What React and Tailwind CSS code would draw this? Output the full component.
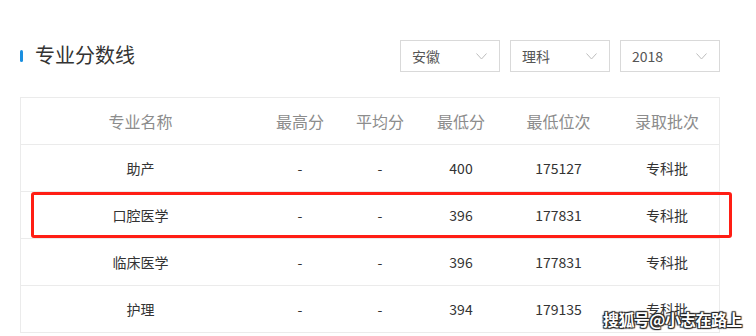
import React from 'react'

const FONT = { fontFamily: '"Noto Sans CJK SC", "Noto Sans", sans-serif' }

const COLS = 'grid grid-cols-[239px_80px_80px_82px_113px_104px]'

const HEAD = ['专业名称', '最高分', '平均分', '最低分', '最低位次', '录取批次']

const ROWS = [
  ['助产', '-', '-', '400', '175127', '专科批'],
  ['口腔医学', '-', '-', '396', '177831', '专科批'],
  ['临床医学', '-', '-', '396', '177831', '专科批'],
  ['护理', '-', '-', '394', '179135', '专科批'],
]

function Select({ label }) {
  return (
    <div className="w-[100px] h-[32px] border border-[#d9d9d9] flex items-center justify-between pl-[11px] pr-[12px] text-[14px] text-[#555] leading-none">
      <span>{label}</span>
      <svg width="11" height="7" viewBox="0 0 11 7" fill="none">
        <path d="M0.5 0.5 L5.5 6 L10.5 0.5" stroke="#bdbdbd" strokeWidth="1" />
      </svg>
    </div>
  )
}

export default function App() {
  return (
    <div style={FONT} className="relative w-[756px] h-[336px] overflow-hidden bg-white px-5 pt-[40px]">
      <div className="w-[700px] h-[32px] flex items-center justify-between">
        <div className="flex items-center gap-[12px]">
          <span className="w-[3px] h-[12px] rounded-[2px] bg-[#1a8fe0]" />
          <span className="text-[20px] text-[#333] leading-none -mt-[2px]">专业分数线</span>
        </div>
        <div className="flex gap-[10px]">
          <Select label="安徽" />
          <Select label="理科" />
          <Select label="2018" />
        </div>
      </div>

      <div className="mt-[25px] w-[700px] border-t border-x border-[#ebebeb]">
        <div className={`${COLS} h-[47px] items-center border-b border-[#ebebeb] text-[16px] text-[#8c8c8c] text-center leading-none`}>
          {HEAD.map((h) => <span key={h}>{h}</span>)}
        </div>
        {ROWS.map((r, i) => (
          <div key={i} className={`${COLS} h-[47px] items-center border-b border-[#ebebeb] text-[14px] text-[#333] text-center leading-none`}>
            {r.map((c, j) => <span key={j}>{c}</span>)}
          </div>
        ))}
      </div>

      <div className="absolute left-[31px] top-[192px] w-[701px] h-[46px] border-[3px] border-[#ff1e14] rounded-[3px]" />

      <div
        className="absolute left-[603px] top-[311px] text-[16px] font-bold text-white leading-none tracking-[-0.6px]"
        style={{ textShadow: '0 0 1px #222, 1px 1px 1px #222, -1px -1px 1px #222, 1px -1px 1px #222, -1px 1px 1px #222' }}
      >
        搜狐号@小志在路上
      </div>
    </div>
  )
}
